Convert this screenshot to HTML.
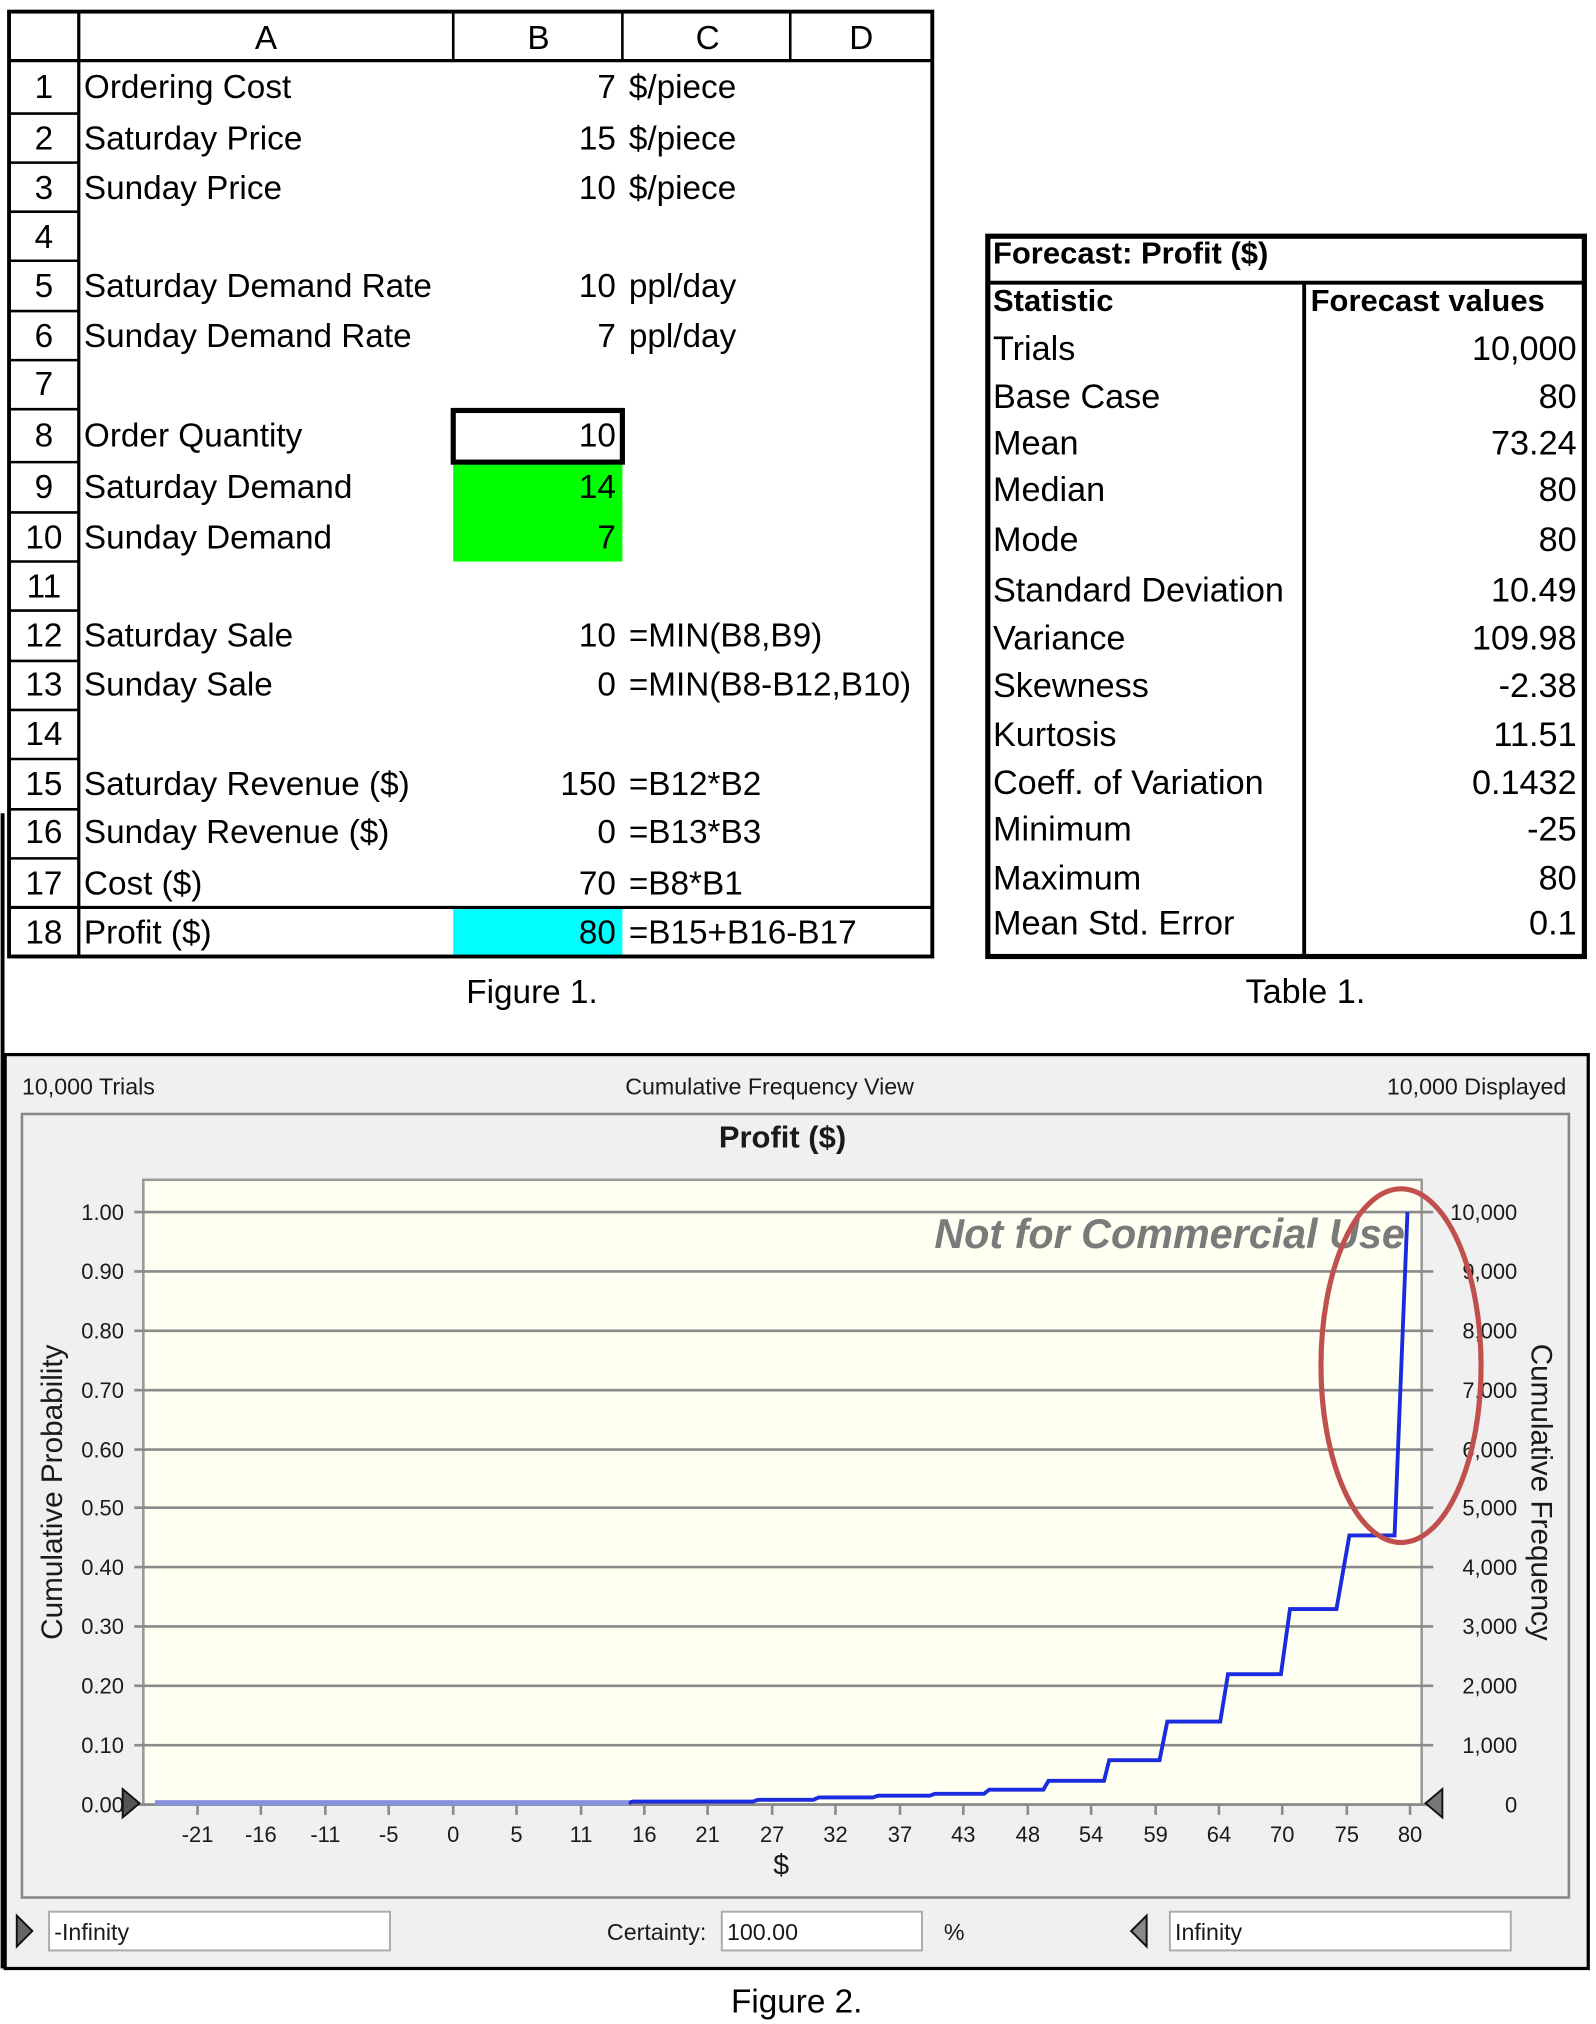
<!DOCTYPE html>
<html><head><meta charset="utf-8"><style>
html,body{margin:0;padding:0;background:#fff;}
svg{display:block;}
.s{font-family:"Liberation Sans",sans-serif;font-size:25.8px;fill:#000;}
.t{font-family:"Liberation Sans",sans-serif;font-size:26.5px;fill:#000;}
.c{font-family:"Liberation Sans Narrow","Liberation Sans",sans-serif;fill:#1a1a1a;}
</style></head><body>
<svg width="1596" height="2024" viewBox="0 0 1236 1568" preserveAspectRatio="none" xmlns="http://www.w3.org/2000/svg">
<rect width="1236" height="1568" fill="#fff"/>
<!-- Spreadsheet -->
<rect x="351" y="358" width="131" height="77" fill="#00ff00"/>
<rect x="351" y="703" width="131" height="38" fill="#00ffff"/>
<g stroke="#000" stroke-width="2" fill="none">
<rect x="7" y="9" width="715" height="732" stroke-width="3"/>
<line x1="7" y1="47" x2="722" y2="47" stroke-width="2.5"/>
<line x1="61" y1="9" x2="61" y2="741" stroke-width="2.5"/>
<line x1="351" y1="9" x2="351" y2="47"/>
<line x1="482" y1="9" x2="482" y2="47"/>
<line x1="612" y1="9" x2="612" y2="47"/>
<line x1="7" y1="703" x2="722" y2="703" stroke-width="2.5"/>
<path d="M7 88H61M7 126H61M7 164H61M7 202H61M7 241H61M7 279H61M7 317H61M7 358H61M7 397H61M7 435H61M7 473H61M7 512H61M7 550H61M7 588H61M7 627H61M7 665H61"/>
<rect x="351" y="318" width="131" height="40" stroke-width="4"/>
<line x1="2" y1="630" x2="2" y2="1525" stroke-width="3"/>
</g>
<g class="s" text-anchor="middle">
<text x="206" y="38">A</text><text x="417" y="38">B</text><text x="548" y="38">C</text><text x="667" y="38">D</text>
<text x="34" y="76">1</text><text x="34" y="116">2</text><text x="34" y="154">3</text><text x="34" y="192">4</text>
<text x="34" y="230">5</text><text x="34" y="269">6</text><text x="34" y="306">7</text><text x="34" y="346">8</text>
<text x="34" y="386">9</text><text x="34" y="425">10</text><text x="34" y="463">11</text><text x="34" y="501">12</text>
<text x="34" y="539">13</text><text x="34" y="577">14</text><text x="34" y="616">15</text><text x="34" y="653">16</text>
<text x="34" y="693">17</text><text x="34" y="731">18</text>
</g>
<g class="s">
<text x="65" y="76">Ordering Cost</text><text x="65" y="116">Saturday Price</text><text x="65" y="154">Sunday Price</text>
<text x="65" y="230">Saturday Demand Rate</text><text x="65" y="269">Sunday Demand Rate</text>
<text x="65" y="346">Order Quantity</text><text x="65" y="386">Saturday Demand</text><text x="65" y="425">Sunday Demand</text>
<text x="65" y="501">Saturday Sale</text><text x="65" y="539">Sunday Sale</text>
<text x="65" y="616">Saturday Revenue  ($)</text><text x="65" y="653">Sunday Revenue ($)</text>
<text x="65" y="693">Cost ($)</text><text x="65" y="731">Profit ($)</text>
<text x="487" y="76">$/piece</text><text x="487" y="116">$/piece</text><text x="487" y="154">$/piece</text>
<text x="487" y="230">ppl/day</text><text x="487" y="269">ppl/day</text>
<text x="487" y="501">=MIN(B8,B9)</text><text x="487" y="539">=MIN(B8-B12,B10)</text>
<text x="487" y="616">=B12*B2</text><text x="487" y="653">=B13*B3</text><text x="487" y="693">=B8*B1</text><text x="487" y="731">=B15+B16-B17</text>
</g>
<g class="s" text-anchor="end">
<text x="477" y="76">7</text><text x="477" y="116">15</text><text x="477" y="154">10</text>
<text x="477" y="230">10</text><text x="477" y="269">7</text>
<text x="477" y="346">10</text><text x="477" y="386">14</text><text x="477" y="425">7</text>
<text x="477" y="501">10</text><text x="477" y="539">0</text>
<text x="477" y="616">150</text><text x="477" y="653">0</text><text x="477" y="693">70</text><text x="477" y="731">80</text>
</g>
<text class="s" x="412" y="777" text-anchor="middle">Figure 1.</text>

<!-- Table 1 -->
<g stroke="#000" fill="none">
<rect x="765" y="183" width="462" height="558" stroke-width="4"/>
<line x1="765" y1="219" x2="1227" y2="219" stroke-width="3"/>
<line x1="1010" y1="219" x2="1010" y2="741" stroke-width="3"/>
</g>
<g class="s" style="font-size:24px">
<text x="769" y="204" font-weight="bold">Forecast: Profit ($)</text>
<text x="769" y="241" font-weight="bold">Statistic</text>
<text x="1015" y="241" font-weight="bold">Forecast values</text>
</g>
<g class="t">
<text x="769" y="279">Trials</text><text x="769" y="316">Base Case</text><text x="769" y="352">Mean</text>
<text x="769" y="388">Median</text><text x="769" y="427">Mode</text><text x="769" y="466">Standard Deviation</text>
<text x="769" y="503">Variance</text><text x="769" y="540">Skewness</text><text x="769" y="578">Kurtosis</text>
<text x="769" y="615">Coeff. of Variation</text><text x="769" y="651">Minimum</text><text x="769" y="689">Maximum</text>
<text x="769" y="724">Mean Std. Error</text>
</g>
<g class="t" text-anchor="end">
<text x="1221" y="279">10,000</text><text x="1221" y="316">80</text><text x="1221" y="352">73.24</text>
<text x="1221" y="388">80</text><text x="1221" y="427">80</text><text x="1221" y="466">10.49</text>
<text x="1221" y="503">109.98</text><text x="1221" y="540">-2.38</text><text x="1221" y="578">11.51</text>
<text x="1221" y="615">0.1432</text><text x="1221" y="651">-25</text><text x="1221" y="689">80</text>
<text x="1221" y="724">0.1</text>
</g>
<text class="t" x="1011" y="777" text-anchor="middle">Table 1.</text>

<!-- Figure 2 -->
<rect x="4" y="817" width="1226" height="708" fill="#f0f0f0" stroke="#000" stroke-width="2.5"/>
<rect x="17" y="863" width="1198" height="607" fill="#f0f0f0" stroke="#888" stroke-width="2"/>
<g class="c" font-size="18">
<text x="17" y="848">10,000 Trials</text>
<text x="596" y="848" text-anchor="middle">Cumulative Frequency View</text>
<text x="1213" y="848" text-anchor="end">10,000 Displayed</text>
</g>
<text class="c" x="606" y="889" text-anchor="middle" font-size="24" font-weight="bold" fill="#000">Profit ($)</text>
<rect x="111" y="914" width="990" height="484" fill="#fffff2" stroke="#999" stroke-width="2"/>
<g stroke="#8a8a8a" stroke-width="2">
<path d="M104 939H1110M104 985H1110M104 1031H1110M104 1077H1110M104 1123H1110M104 1168H1110M104 1214H1110M104 1260H1110M104 1306H1110M104 1352H1110M104 1398H1110"/>
<path d="M153 1398v8M202 1398v8M252 1398v8M301 1398v8M351 1398v8M400 1398v8M450 1398v8M499 1398v8M548 1398v8M598 1398v8M647 1398v8M697 1398v8M746 1398v8M796 1398v8M845 1398v8M895 1398v8M944 1398v8M993 1398v8M1043 1398v8M1092 1398v8"/>
</g>
<g class="c" font-size="17" text-anchor="end">
<text x="96" y="945">1.00</text><text x="96" y="991">0.90</text><text x="96" y="1037">0.80</text>
<text x="96" y="1083">0.70</text><text x="96" y="1129">0.60</text><text x="96" y="1174">0.50</text>
<text x="96" y="1220">0.40</text><text x="96" y="1266">0.30</text><text x="96" y="1312">0.20</text>
<text x="96" y="1358">0.10</text><text x="96" y="1404">0.00</text>
<text x="1175" y="945">10,000</text><text x="1175" y="991">9,000</text><text x="1175" y="1037">8,000</text>
<text x="1175" y="1083">7,000</text><text x="1175" y="1129">6,000</text><text x="1175" y="1174">5,000</text>
<text x="1175" y="1220">4,000</text><text x="1175" y="1266">3,000</text><text x="1175" y="1312">2,000</text>
<text x="1175" y="1358">1,000</text><text x="1175" y="1404">0</text>
</g>
<g class="c" font-size="17" text-anchor="middle">
<text x="153" y="1427">-21</text><text x="202" y="1427">-16</text><text x="252" y="1427">-11</text><text x="301" y="1427">-5</text>
<text x="351" y="1427">0</text><text x="400" y="1427">5</text><text x="450" y="1427">11</text><text x="499" y="1427">16</text>
<text x="548" y="1427">21</text><text x="598" y="1427">27</text><text x="647" y="1427">32</text><text x="697" y="1427">37</text>
<text x="746" y="1427">43</text><text x="796" y="1427">48</text><text x="845" y="1427">54</text><text x="895" y="1427">59</text>
<text x="944" y="1427">64</text><text x="993" y="1427">70</text><text x="1043" y="1427">75</text><text x="1092" y="1427">80</text>
<text x="605" y="1452" font-size="22">$</text>
</g>
<text class="c" font-size="23" transform="translate(48 1156) rotate(-90)" text-anchor="middle" style="font-family:'Liberation Sans',sans-serif" fill="#333">Cumulative Probability</text>
<text class="c" font-size="23" transform="translate(1186 1156) rotate(90)" text-anchor="middle" style="font-family:'Liberation Sans',sans-serif" fill="#333">Cumulative Frequency</text>
<text x="1088" y="967" text-anchor="end" font-family="'Liberation Sans',sans-serif" font-size="32" font-weight="bold" font-style="italic" fill="#7a7a7a">Not for Commercial Use</text>
<path d="M120 1396.6H487L490 1395.7H583L587 1394.3H630L634 1392.5H676L680 1391.1H720L724 1389.7H762L766 1386.5H808L812 1379.6H855L859 1363.6H898L904 1333.7H945L951 1297H992L999 1246.5H1035L1045 1189.5H1080L1090 939" fill="none" stroke="#1a2be0" stroke-width="3"/>
<path d="M120 1396.6H487" stroke="#8a90e0" stroke-width="4"/>
<ellipse cx="1085" cy="1058" rx="62" ry="137" fill="none" stroke="#c0504d" stroke-width="4"/>
<path d="M95 1386L108 1397L95 1408Z" fill="#555" stroke="#111" stroke-width="1.5"/>
<path d="M1117 1386L1104 1397L1117 1408Z" fill="#777" stroke="#111" stroke-width="1.5"/>
<!-- bottom controls -->
<path d="M13 1484L25 1496L13 1508Z" fill="#666" stroke="#111" stroke-width="1.5"/>
<rect x="38" y="1481" width="264" height="30" fill="#fff" stroke="#aaa" stroke-width="1.5"/>
<text class="c" x="42" y="1503" font-size="18">-Infinity</text>
<text class="c" x="547" y="1503" font-size="18" text-anchor="end">Certainty:</text>
<rect x="559" y="1481" width="155" height="30" fill="#fff" stroke="#aaa" stroke-width="1.5"/>
<text class="c" x="563" y="1503" font-size="18">100.00</text>
<text class="c" x="731" y="1503" font-size="18">%</text>
<path d="M888 1484L876 1496L888 1508Z" fill="#888" stroke="#111" stroke-width="1.5"/>
<rect x="906" y="1481" width="264" height="30" fill="#fff" stroke="#aaa" stroke-width="1.5"/>
<text class="c" x="910" y="1503" font-size="18">Infinity</text>
<text class="s" x="617" y="1559" text-anchor="middle">Figure 2.</text>
</svg>
</body></html>
